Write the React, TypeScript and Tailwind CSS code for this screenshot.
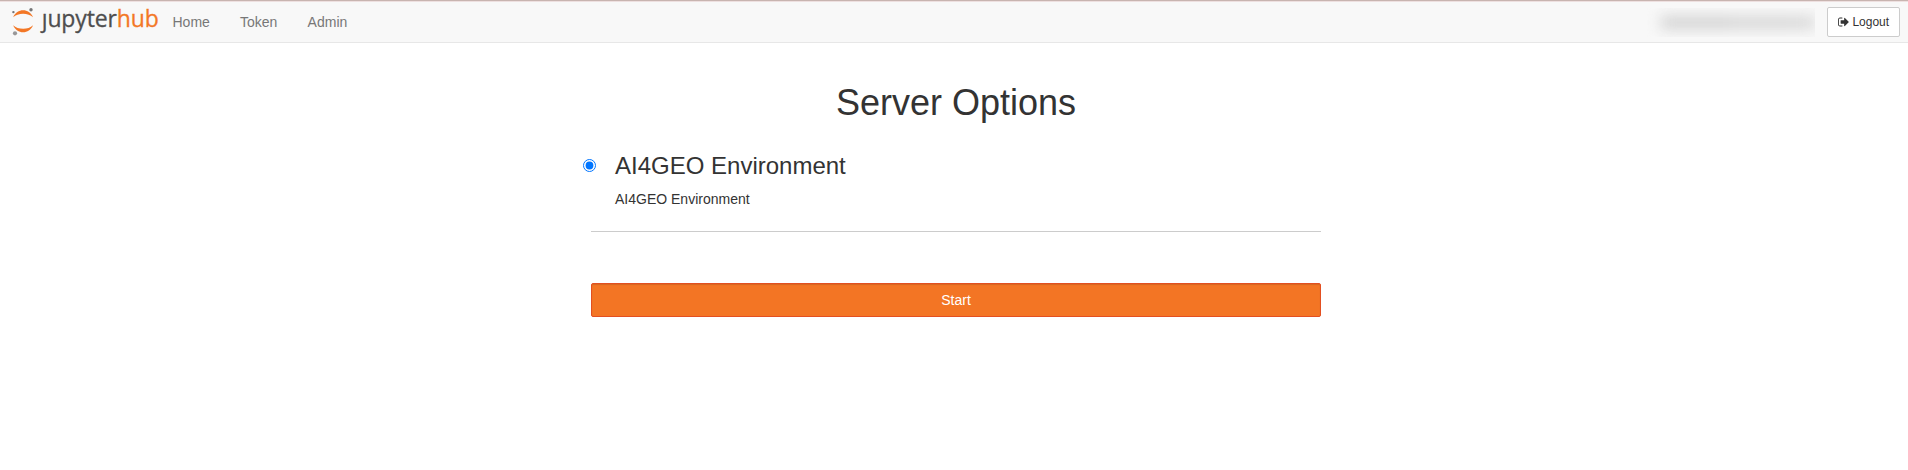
const navItems = ["Home", "Token", "Admin"];

function Logo() {
  return (
    <svg className="block h-[41px] w-[150px] shrink-0" viewBox="0 -6 150 41" role="img" aria-label="jupyterhub">
      <path d="M1.2 10.2C3 5.400 7 3.200 11.100 3.200S19.200 5.400 21 10.200C18.700 7.900 15 6.700 11.100 6.700S3.500 7.900 1.200 10.200Z" fill="#f37726" />
      <path d="M1.200 18.200C3.500 20.600 7.200 21.700 11.100 21.700S18.700 20.600 21 18.200C19.200 23 15.200 25.200 11.100 25.200S3 23 1.200 18.200Z" fill="#f37726" />
      <circle cx="19" cy="2.800" r="1.700" fill="#767677" />
      <circle cx="1.400" cy="5.100" r="1.200" fill="#767677" />
      <circle cx="3" cy="26.300" r="2.100" fill="#989798" />
      <text x="29.700" y="20" className="font-['Open_Sans',sans-serif] text-[23px]" textLength="117.200" lengthAdjust="spacing" fill="#4e4e4e" stroke="#4e4e4e" strokeWidth="0.3">
        ȷupyter<tspan fill="#f37726" stroke="#f37726">hub</tspan>
      </text>
    </svg>
  );
}

function SignOutIcon() {
  return (
    <svg className="h-[12px] w-[11px] shrink-0" viewBox="0 130 1600 1536" fill="currentColor" aria-hidden="true">
      <path d="M640 1440q0 4 1 20t.5 26.5-3 23.5-10 19.5-20.5 6.5h-320q-119 0-203.500-84.500t-84.500-203.500v-704q0-119 84.500-203.500t203.500-84.500h320q13 0 22.500 9.500t9.500 22.500q0 4 1 20t.5 26.500-3 23.500-10 19.500-20.500 6.500h-320q-66 0-113 47t-47 113v704q0 66 47 113t113 47h312l11.500 1 11.500 3 8 5.500 7 9 2 13.500zm928-544q0 26-19 45l-544 544q-19 19-45 19t-45-19-19-45v-288h-448q-26 0-45-19t-19-45v-384q0-26 19-45t45-19h448v-288q0-26 19-45t45-19 45 19l544 544q19 19 19 45z" />
    </svg>
  );
}

export default function App() {
  return (
    <div className="min-h-[470px] bg-white font-['Liberation_Sans',Arial,sans-serif] text-sm leading-5 text-[#333]">
      <nav className="flex h-[43px] items-center border-b border-t border-b-[#e7e7e7] border-t-[#c8b4b0] bg-[#f8f8f8] pl-[12px] pr-[8px] shadow-[inset_0_1px_0_#eee0e0]">
        <Logo />
        <ul className="ml-[10.500px] flex gap-[30.200px] text-[#777]">
          {navItems.map((item) => (
            <li key={item}>
              <a href="#">{item}</a>
            </li>
          ))}
        </ul>
        <div className="ml-auto flex items-center gap-[12px]">
          <div className="mt-[2px] flex h-[29px] w-[174px] items-center overflow-hidden pl-[20px]">
            <div className="flex h-[13px] w-full blur-[7px]">
              <span className="w-[70px] bg-[#d2d2d2]" />
              <span className="w-[60px] bg-[#d6d6d6]" />
              <span className="w-[24px] bg-[#d8d8d8]" />
            </div>
          </div>
          <button className="flex h-[30px] w-[73px] items-center justify-center gap-[3.500px] rounded-[2px] border border-[#ccc] bg-white text-xs text-[#333]">
            <SignOutIcon />
            Logout
          </button>
        </div>
      </nav>
      <main className="mx-auto flex w-[730px] translate-x-[2px] flex-col pt-[40px]">
        <h1 className="text-center text-4xl leading-10">Server Options</h1>
        <label className="mt-[30px] flex items-start">
          <input type="radio" name="profile" defaultChecked className="-ml-[8px] mt-[6px] size-[13px] shrink-0" />
          <span className="ml-[19px] flex flex-col">
            <span className="text-2xl leading-[26px]">AI4GEO Environment</span>
            <span className="mt-[10px]">AI4GEO Environment</span>
          </span>
        </label>
        <hr className="mt-[22px] border-[#ccc]" />
        <button className="mt-[51px] h-[34px] rounded-[2px] border border-[#e34f21] bg-[#f37524] text-white shadow-[inset_0_1px_1px_rgba(0,0,0,0.12)]">
          Start
        </button>
      </main>
    </div>
  );
}
